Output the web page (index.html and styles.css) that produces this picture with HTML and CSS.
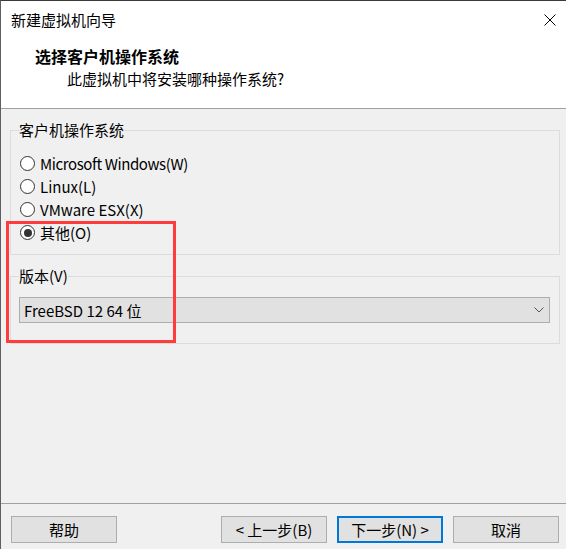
FILE: index.html
```html
<!DOCTYPE html>
<html lang="zh-CN">
<head>
<meta charset="utf-8">
<title>新建虚拟机向导</title>
<link rel="stylesheet" href="styles.css">
</head>
<body>
<div class="window">
  <div class="header">
    <div class="titlebar">
      <span class="title">新建虚拟机向导</span>
      <svg class="close" width="12" height="12" viewBox="0 0 12 12"><path d="M0.5 0.5 L11.5 11.5 M11.5 0.5 L0.5 11.5" stroke="#000" stroke-width="1" fill="none"/></svg>
    </div>
    <div class="heading">选择客户机操作系统</div>
    <div class="subheading">此虚拟机中将安装哪种操作系统?</div>
  </div>

  <div class="content">
    <fieldset class="group os-group">
      <legend>客户机操作系统</legend>
      <div class="radio-row"><span class="radio"></span><span class="wide">Microsoft Windows(W)</span></div>
      <div class="radio-row"><span class="radio"></span><span>Linux(L)</span></div>
      <div class="radio-row"><span class="radio"></span><span>VMware ESX(X)</span></div>
      <div class="radio-row"><span class="radio checked"></span><span>其他(O)</span></div>
    </fieldset>

    <fieldset class="group version-group">
      <legend>版本(V)</legend>
      <div class="combo">
        <span>FreeBSD 12 64 位</span>
        <svg class="chevron" width="10" height="6" viewBox="0 0 10 6"><path d="M0.5 0.5 L5 5 L9.5 0.5" stroke="#555" stroke-width="1" fill="none"/></svg>
      </div>
    </fieldset>
  </div>

  <div class="footer">
    <button class="btn">帮助</button>
    <div class="spacer"></div>
    <button class="btn">&lt; 上一步(B)</button>
    <button class="btn primary">下一步(N) &gt;</button>
    <button class="btn">取消</button>
  </div>

  <div class="highlight"></div>
</div>
</body>
</html>
```

FILE: styles.css
```css
* { box-sizing: border-box; }

html, body {
  margin: 0;
  padding: 0;
  width: 566px;
  height: 549px;
  overflow: hidden;
  background: #f0f0f0;
}

body {
  font-family: "Noto Sans CJK SC", "Noto Sans", sans-serif;
  font-size: 15px;
  color: #000;
}

.window {
  position: relative;
  width: 566px;
  height: 549px;
  display: flex;
  flex-direction: column;
  border-left: 1px solid #5f5f5f;
  border-top: 1px solid #3a3a3a;
  background: #f0f0f0;
}

.header {
  background: #fff;
  height: 108px;
  border-bottom: 1px solid #a0a0a0;
  flex: none;
}

.titlebar {
  height: 37px;
  display: flex;
  align-items: center;
  justify-content: space-between;
  padding-left: 10px;
  padding-right: 10px;
  line-height: 20px;
}

.title { font-size: 15px; }

.close { display: block; }

.heading {
  margin-top: 8px;
  padding-left: 34px;
  font-weight: bold;
  font-size: 16px;
  line-height: 20px;
}

.subheading {
  margin-top: 3px;
  padding-left: 66px;
  line-height: 20px;
}

.content {
  flex: 1;
  padding: 0 6px 0 9px;
}

.group {
  margin: 0;
  border: 1px solid #dcdcdc;
  padding: 0 9px 0 8px;
  min-width: 0;
}

.group legend {
  padding: 0;
  line-height: 20px;
  color: #000;
}

.os-group {
  margin-top: 11px;
  padding-top: 12px;
  padding-bottom: 10px;
}

.radio-row {
  height: 23px;
  display: flex;
  align-items: center;
  gap: 5px;
  padding-left: 1px;
}

.wide { letter-spacing: -0.4px; }

.radio {
  width: 15px;
  height: 15px;
  border: 1px solid #333;
  border-radius: 50%;
  background: #fff;
  display: flex;
  align-items: center;
  justify-content: center;
  flex: none;
}

.radio.checked::after {
  content: "";
  width: 8px;
  height: 8px;
  border-radius: 50%;
  background: #333;
}

.version-group {
  margin-top: 11px;
  padding-top: 11px;
  padding-bottom: 20px;
}

.combo {
  height: 26px;
  border: 1px solid #adadad;
  background: #e1e1e1;
  display: flex;
  align-items: center;
  justify-content: space-between;
  padding: 0 5px 0 4px;
}

.chevron { display: block; }

.footer {
  flex: none;
  height: 46px;
  border-top: 1px solid #a0a0a0;
  display: flex;
  align-items: flex-start;
  gap: 10px;
  padding: 12px 7px 0 10px;
}

.spacer { flex: 1; }

.btn {
  width: 106px;
  height: 27px;
  border: 1px solid #adadad;
  background: #e1e1e1;
  font-family: inherit;
  font-size: 15px;
  color: #000;
  padding: 0;
  line-height: 20px;
}

.btn.primary {
  border: 2px solid #0078d7;
}

.highlight {
  position: absolute;
  left: 5px;
  top: 220px;
  width: 170px;
  height: 122px;
  border: 3px solid #ff3b3b;
  pointer-events: none;
}
```
